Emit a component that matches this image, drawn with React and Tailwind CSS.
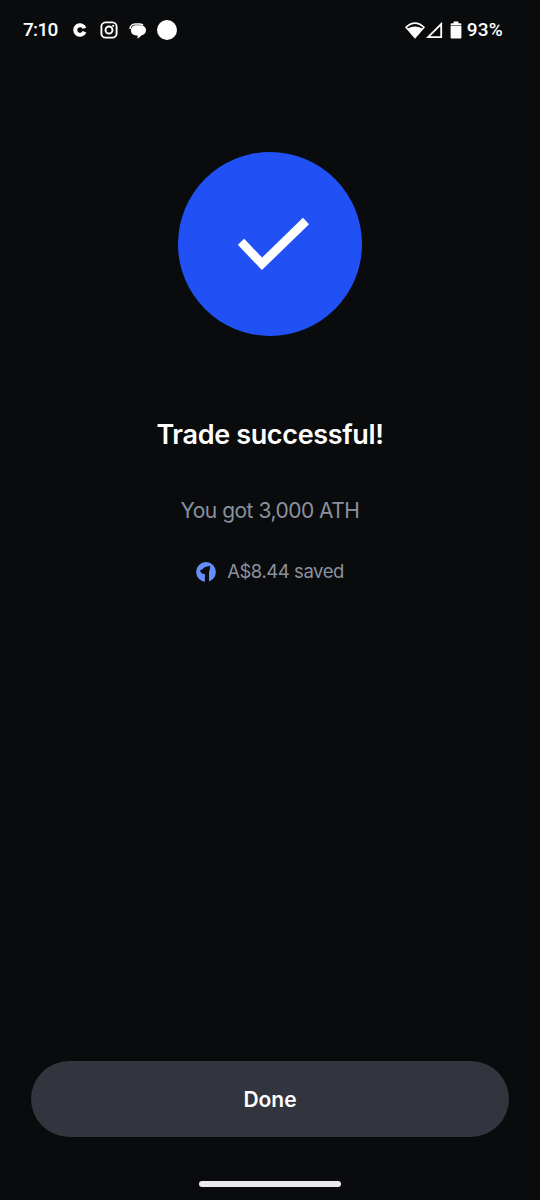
function StatusBar() {
  return (
    <header className="flex h-[60px] shrink-0 items-center justify-between pl-[23px] pr-[37px] font-['Roboto','Noto_Sans',sans-serif] text-[19px] font-medium text-white">
      <div className="flex items-center">
        <span className="w-[50px] tracking-[-0.7px]">7:10</span>
        <svg className="h-[14px] w-[14px]" viewBox="0 0 14 14" fill="none">
          <path d="M11.5 5.3A4.8 4.8 0 1 0 11.5 8.7" stroke="currentColor" strokeWidth="4" />
        </svg>
        <svg className="ml-[13px] h-[18px] w-[18px]" viewBox="0 0 18 18" fill="none">
          <rect x="1.4" y="1.4" width="15.2" height="15.2" rx="4.2" stroke="currentColor" strokeWidth="1.9" />
          <circle cx="9" cy="9" r="3.5" stroke="currentColor" strokeWidth="1.9" />
          <circle cx="13.2" cy="4.8" r="1.1" fill="currentColor" />
        </svg>
        <svg className="ml-[11px] h-[17px] w-[17px]" viewBox="0 0 17 17">
          <path d="M1 7A5.2 5.2 0 0 1 6 1.9h4.4q2 0 3.6 1.2" fill="none" stroke="currentColor" strokeWidth="1.5" />
          <path d="M6.8 3.3h4.6a5 5 0 0 1 1.4 9.9L8.6 16.8v-3.4H7.4C4 13.4 1.9 11.2 1.9 8.3a4.9 4.9 0 0 1 4.9-5Z" fill="currentColor" />
        </svg>
        <span className="ml-[11px] h-5 w-5 rounded-full bg-white" />
      </div>

      <div className="flex items-center">
        <svg className="h-[17px] w-[20px]" viewBox="0 0 20 17">
          <path d="M1 5.2Q10-3 19 5.2L10 15.6Z" fill="none" stroke="currentColor" strokeWidth="1.5" />
          <path d="M2.8 6.6Q10 2.4 17.2 6.6L10 15.6Z" fill="currentColor" />
        </svg>
        <svg className="ml-px h-[17px] w-[17px]" viewBox="0 0 17 17" fill="none">
          <path d="M15.2 2v13.2H2Z" stroke="currentColor" strokeWidth="1.8" />
        </svg>
        <svg className="ml-[7px] h-[18px] w-[12px]" viewBox="0 0 12 18" fill="currentColor">
          <path d="M3.6.6h4.8v1.7h1.8a1.2 1.2 0 0 1 1.2 1.2v.7H.6v-.7a1.2 1.2 0 0 1 1.2-1.2h1.8Z" />
          <path d="M.6 4.8h10.8v11.4a1.2 1.2 0 0 1-1.2 1.2H1.8a1.2 1.2 0 0 1-1.2-1.2Z" />
        </svg>
        <span className="ml-[5px] tracking-[0.2px]">93%</span>
      </div>
    </header>
  );
}

function SavedBadge() {
  return (
    <svg className="mt-px h-5 w-5" viewBox="0 0 20 20">
      <circle cx="10" cy="10" r="9.9" fill="#668ef8" />
      <path d="M4 8.2C6.6 8 7.4 5.4 10 4.7c1.6-.4 3-.5 4.2-1 .1 2.6-.9 4.6-1.2 6.3v10H8.9v-8.2C6.8 12.6 4.8 11 4 8.2Z" fill="#0a0b0d" />
    </svg>
  );
}

export default function App() {
  return (
    <div className="flex h-[1200px] w-full flex-col bg-[#0a0b0d] font-['Inter','Liberation_Sans',sans-serif]">
      <StatusBar />

      <main className="flex flex-1 flex-col items-center pt-[92px]">
        <div className="h-[184px] w-[184px] rounded-full bg-[#2151f5]">
          <svg viewBox="0 0 184 184" fill="none">
            <path d="M63 89.8 84 111.8 128 69" stroke="white" strokeWidth="8.8" />
          </svg>
        </div>

        <h1 className="mt-[79px] text-[27px] font-semibold leading-10 tracking-[-0.35px] text-white">
          Trade successful!
        </h1>
        <p className="mt-[40px] text-[21px] leading-8 tracking-[-0.5px] text-[#8a919e]">You got 3,000 ATH</p>
        <div className="mt-[30px] flex items-center gap-[11px] text-[18.5px] leading-7 tracking-[-0.45px] text-[#8a919e]">
          <SavedBadge />
          <span>A$8.44 saved</span>
        </div>
      </main>

      <footer className="flex flex-col items-center px-[31px] pb-[13px]">
        <button className="h-[76px] w-full rounded-full bg-[#32353d] pt-[2px] text-[21px] font-semibold text-white">
          Done
        </button>
        <div className="mt-[44px] h-[6px] w-[142px] rounded-full bg-[#ececf0]" />
      </footer>
    </div>
  );
}
